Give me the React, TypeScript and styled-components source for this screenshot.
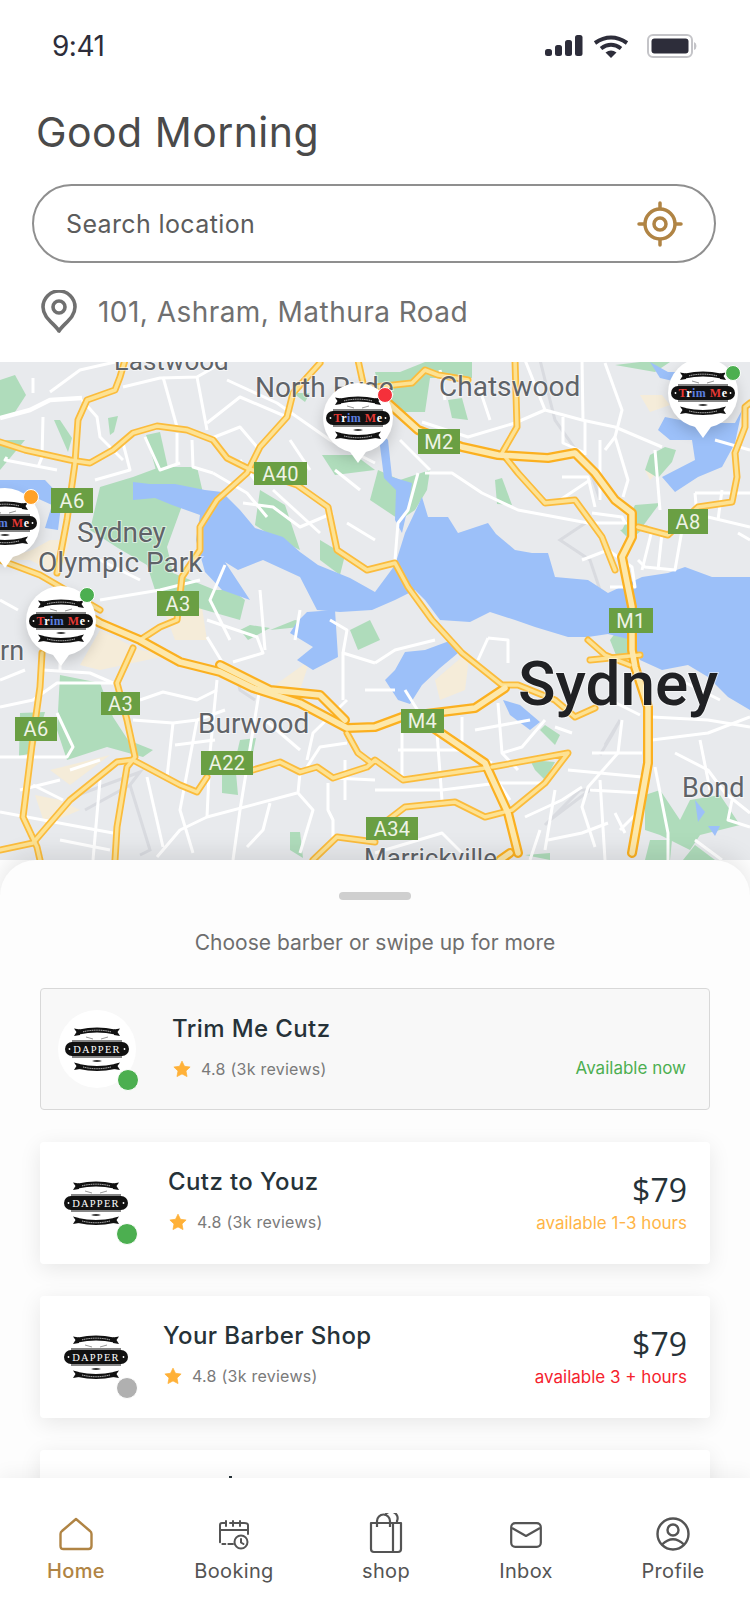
import React from "react";
import styled, { createGlobalStyle } from "styled-components";

const Global = createGlobalStyle`
  html, body { margin: 0; padding: 0; background: #fff; }
  * { box-sizing: border-box; }
`;

const Screen = styled.div`
  width: 750px; height: 1624px; overflow: hidden; display: flex; flex-direction: column;
  background: #fff; font-family: Inter, "Noto Sans", sans-serif; color: #444;
`;
const Header = styled.header`display: flex; flex-direction: column; height: 362px; flex: none;`;
const StatusBar = styled.div`
  height: 107px; flex: none; display: flex; justify-content: space-between; align-items: flex-start;
  padding: 28px 53px 0 52px;
`;
const Clock = styled.span`font: 400 28px/36px Inter, sans-serif; color: #2d2d3a; letter-spacing: -.5px;`;
const StatusIcons = styled.div`display: flex; align-items: center; gap: 10px; margin-top: 6px;`;
const Title = styled.h1`
  margin: 0 0 0 36px; font: 400 41px/50px Inter, sans-serif; color: #4a4a4a; letter-spacing: .45px; height: 50px;
`;
const SearchBox = styled.div`
  margin: 27px 34px 0 32px; height: 79px; border: 2px solid #8f8f8f; border-radius: 40px; display: flex;
  align-items: center; justify-content: space-between; padding: 0 31px 0 32px;
`;
const SearchText = styled.span`font: 400 25px/30px Inter, sans-serif; color: #5c5c5c; letter-spacing: .37px;`;
const LocationRow = styled.div`margin: 27px 0 0 41px; height: 43px; display: flex; align-items: center; gap: 21px;`;
const LocationText = styled.span`font: 400 28px/36px Inter, sans-serif; color: #707070; letter-spacing: .45px;`;

const MapArea = styled.section`position: relative; height: 498px; flex: none; overflow: hidden; background: #e8eaed;`;
const MapSvg = styled.svg`display: block; width: 750px; height: 498px;`;
const Pin = styled.div<{ $x: number; $y: number }>`
  position: absolute; left: ${p => p.$x - 35}px; top: ${p => p.$y - 35 - 362}px; width: 70px; height: 70px;
  border-radius: 50%; background: #fff; display: flex; align-items: center; justify-content: center;
  box-shadow: 0 6px 14px rgba(0,0,0,.16);
  &::after {
    content: ""; position: absolute; left: 26px; bottom: -10px; width: 18px; height: 18px; background: #fff;
    clip-path: polygon(0 30%, 100% 30%, 50% 100%);
  }
`;
const PinDot = styled.span<{ $c: string; $dx: number; $dy: number }>`
  position: absolute; left: ${p => 35 + p.$dx - 8}px; top: ${p => 35 + p.$dy - 8}px; width: 16px; height: 16px;
  border-radius: 50%; background: ${p => p.$c}; border: 1px solid #fff; z-index: 1;
`;

const Sheet = styled.section`
  position: relative; z-index: 1; flex: 1; min-height: 0; overflow: hidden; background: #fdfdfd;
  border-radius: 36px 36px 0 0; padding-top: 32px; display: flex; flex-direction: column; align-items: center;
  box-shadow: 0 -6px 24px rgba(0,0,0,.1);
`;
const SheetWrap = styled.div`position: relative; z-index: 1; flex: 1; min-height: 0; display: flex;`;
const Handle = styled.div`width: 72px; height: 8px; border-radius: 4px; background: #cfcfcf; flex: none;`;
const Hint = styled.p`margin: 28px 0 0; font: 400 21px/30px Inter, sans-serif; color: #6e6e6e; flex: none;`;
const CardList = styled.div`margin-top: 30px; width: 670px; display: flex; flex-direction: column; gap: 32px; flex: none;`;
const Card = styled.article<{ $selected?: boolean }>`
  position: relative; height: 122px; flex: none; display: flex; padding: 0 23px 0 17px; border-radius: 4px;
  background: ${p => (p.$selected ? "#f8f8f8" : "#fff")};
  border: ${p => (p.$selected ? "1px solid #d8d8d8" : "none")};
  box-shadow: ${p => (p.$selected ? "none" : "0 5px 22px rgba(0,0,0,.09)")};
`;
const Avatar = styled.div`
  position: relative; width: 78px; height: 78px; border-radius: 50%; background: #fff; flex: none; align-self: center;
  display: flex; align-items: center; justify-content: center;
`;
const StatusDot = styled.span<{ $c: string }>`
  position: absolute; right: -3px; bottom: -3px; width: 22px; height: 22px; border-radius: 50%;
  background: ${p => p.$c}; border: 1px solid #fff;
`;
const Info = styled.div<{ $gap: number }>`margin-left: ${p => p.$gap}px; padding-top: 24px; display: flex; flex-direction: column; gap: 12px;`;
const Name = styled.h3`margin: 0; font: 500 24px/32px Inter, sans-serif; color: #263238; letter-spacing: .4px;`;
const Rating = styled.div`display: flex; align-items: center; gap: 10px; height: 24px; margin-left: 1px;`;
const RatingText = styled.span`font: 400 16px/24px Inter, sans-serif; color: #7a7a7a; letter-spacing: .25px;`;
const Right = styled.div`margin-left: auto; padding-top: 30px; display: flex; flex-direction: column; align-items: flex-end; justify-content: flex-end; gap: 2px; padding-bottom: 30px;`;
const Price = styled.div`font: 500 32px/36px "Open Sans", sans-serif; color: #263238; span { font-weight: 400; }`;
const Avail = styled.span<{ $c: string }>`font: 400 17px/24px Inter, sans-serif; color: ${p => p.$c}; position: relative; top: 1px;`;
const Tick = styled.span`position: absolute; left: 189px; top: 26px; width: 3px; height: 4px; background: #263238;`;

const Nav = styled.nav`
  position: relative; z-index: 2; height: 146px; flex: none; background: #fff; box-shadow: 0 -4px 18px rgba(0,0,0,.05);
`;
const NavRow = styled.div`display: grid; grid-template-columns: 152px 164px 140px 140px 154px; height: 100%;`;
const NavItem = styled.div<{ $active?: boolean }>`
  display: flex; flex-direction: column; align-items: center; color: ${p => (p.$active ? "#b08444" : "#545454")};
`;
const NavIconBox = styled.div`height: 76px; display: flex; align-items: flex-end; justify-content: center; padding-bottom: 3px;`;
const NavLabel = styled.span<{ $active?: boolean }>`
  font: ${p => (p.$active ? 500 : 400)} 20px/30px Inter, sans-serif; margin-top: 2px; letter-spacing: .35px;
`;

const water = [
  "133,482 150,484 175,484 205,490 222,492 240,510 255,528 283,537 300,552 318,565 350,578 375,592 395,565 405,533 422,497 428,517 448,517 458,533 488,523 496,534 515,550 532,553 548,553 555,577 588,580 608,593 642,577 668,573 685,567 712,577 735,577 750,577 750,710 728,697 708,677 688,665 662,670 640,660 632,640 608,634 588,637 568,637 535,627 515,620 490,612 470,622 440,620 425,600 415,590 395,600 372,610 340,612 317,610 300,577 263,560 238,570 225,562 250,600 222,590 205,572 196,540 200,515 172,505 155,498 133,500",
  "297,622 307,612 335,610 338,657 313,670 297,660 313,647 290,633",
  "395,670 405,652 425,650 452,640 458,653 440,668 422,685 410,704 398,700 385,680",
  "658,430 665,417 695,423 735,423 742,410 735,443 722,467 698,477 675,492 662,477 695,460 692,440 670,440",
  "378,430 388,440 392,477 412,483 408,507 402,533 395,520 396,490 384,478",
  "0,480 45,480 62,498 58,530 45,528 52,505 30,495 0,492",
  "650,362 668,372 680,372 690,385 660,378",
  "503,700 520,705 540,722 530,730 510,715",
  "695,800 705,812 698,822",
  "708,826 720,826 715,836",
];
const parks = [
  "60,675 100,683 113,717 128,740 153,750 143,757 107,747 67,760 57,730",
  "20,713 45,712 33,753 19,756",
  "100,487 133,477 160,467 197,467 203,493 183,503 167,547 173,573 215,590 232,590 245,600 240,620 170,600 155,590 147,565 118,548 90,530",
  "0,380 15,375 26,395 15,412 0,418",
  "54,420 60,420 72,438 68,452",
  "108,418 118,416 114,432 110,435",
  "146,435 160,432 168,468 156,470",
  "322,455 355,455 375,470 335,475",
  "293,393 310,393 305,402",
  "375,372 400,372 425,362 472,362 472,378 430,378 425,412 385,412",
  "448,400 462,398 468,420 452,418",
  "615,365 640,362 670,362 655,372",
  "650,455 665,447 676,450 672,462 658,478 645,470",
  "495,480 502,478 512,505 497,504",
  "427,490 430,470 400,480 378,470 370,500 400,520 415,510",
  "635,505 660,503 640,530 622,530",
  "620,530 648,525 630,540",
  "260,490 285,505 300,550 270,535 255,525",
  "320,540 345,555 340,575 320,560",
  "370,620 350,630 358,650 380,640",
  "250,625 270,628 248,640 240,630",
  "270,630 295,620 320,625",
  "625,620 640,640 620,665 610,640",
  "240,740 256,738 252,758 236,757",
  "222,775 236,773 238,795 222,793",
  "290,832 300,832 303,858 290,850",
  "645,795 660,790 680,820 690,800 720,795 740,825 700,835 690,850 660,835 645,830",
  "650,840 672,840 670,860 645,860",
  "683,860 695,845 715,860",
  "525,855 550,853 550,860",
  "530,760 555,762 545,780 535,770",
  "0,440 25,440 0,470",
  "545,725 560,735 555,745 540,730",
];
const sand = [
  "0,560 32,550 50,540 70,540 60,575 30,560",
  "100,630 140,650 170,655 100,670 80,665",
  "160,600 200,595 207,640 175,640",
  "268,690 310,660 300,690 278,685",
  "435,680 470,650 465,690 440,700",
  "35,795 60,800 80,810 45,825",
  "50,770 110,755 70,785",
  "640,395 662,395 670,405 650,412",
  "645,470 660,470 650,480",
];
const grey = [
  "78,795 140,772 130,785 85,810",
  "130,785 150,850 140,855",
  "590,520 560,540 590,560 600,590",
  "600,755 612,735 620,720 605,745",
  "545,825 580,790 590,790 550,820",
  "540,360 555,420 590,470 600,500",
  "235,670 240,690 255,700",
];
const minor = [
  "0,418 30,410 50,400 82,398","43,417 42,457 38,467","7,457 5,460 57,470","33,378 33,393","50,392 80,370 115,362",
  "82,400 97,417 100,437 123,460","123,387 160,378 197,377 227,360","163,377 177,427","197,377 207,430",
  "227,380 277,403 330,440 375,463","207,440 240,427 257,447","207,423 240,397 287,417","123,443 130,470 95,480",
  "145,437 160,470 180,463","177,463 177,433","192,440 193,467 213,473","213,473 247,493 267,517",
  "243,503 273,507 300,527 333,513","273,490 320,533","347,523 375,540","425,473 452,473 482,493 518,510 588,523 635,523",
  "418,473 408,510 398,523 395,560","422,422 468,437 515,423 545,410 582,420 615,427 662,447","563,417 563,443 585,453",
  "582,360 583,420","605,363 622,410 615,437 628,480 623,497","525,360 545,410","585,420 585,455","615,437 605,450",
  "695,493 750,493","695,493 698,527","722,490 718,520","708,517 750,527","738,533 750,540","562,477 588,477 595,507",
  "592,513 622,517 625,523","582,560 608,550 632,567 635,587 610,587","638,560 645,567 675,570 682,530","642,570 652,530","662,533 658,570",
  "0,707 33,700 57,683 113,683","43,670 90,673 113,683","0,757 67,757 73,747 57,713","133,720 173,723 197,720 225,710",
  "140,700 163,692 197,700 217,690","217,680 210,753 207,817","173,723 167,777","197,720 180,810 193,853","260,687 240,810 233,860",
  "0,812 113,833","33,785 63,800","100,780 93,860","147,777 163,847","297,793 207,817 180,830 157,857","300,773 298,793 313,810 300,853",
  "270,803 263,830 247,847","328,783 328,810 333,820 333,840","375,780 333,778","343,700 343,653 375,663","343,653 347,630 330,620",
  "233,662 263,653 257,637 207,620","207,637 227,670","347,700 313,733 307,760","347,743 320,747 307,767","375,663 395,650 435,640",
  "488,638 508,640 508,663","488,638 478,660","402,733 402,777","398,750 462,750 492,763","437,733 442,800","462,717 462,750",
  "498,703 502,753 518,770","545,720 522,747 502,753","555,727 572,733","375,790 442,790 498,783 542,783","568,770 642,777",
  "622,720 618,753 588,787 582,807 595,847","592,753 642,753","590,790 642,793","615,813 625,833","652,740 708,733 750,717","652,717 708,720 750,727",
  "675,753 708,770 725,793 750,813","655,767 668,833 668,860","732,800 728,820 750,827","695,840 722,860","548,840 582,833 608,823",
  "525,817 562,800 582,787","375,853 442,833 462,853","0,525 40,520","100,600 160,590 200,580","260,590 265,650","300,610 295,640","0,600 18,610","0,680 25,670",
  "540,830 530,860","600,780 605,860","620,830 640,810","100,560 140,580","225,565 210,600 230,640","440,370 445,400",
  "60,640 60,670","175,745 215,740","265,720 300,750","365,690 395,690","405,690 430,730","475,730 530,720","610,700 640,715","680,680 720,700","70,770 100,760",
  "345,760 345,800","240,460 255,480","290,440 310,470","335,470 360,490","480,390 490,420","600,440 600,500","655,450 660,510","560,500 590,480","110,850 60,840","20,790 60,780",
  "680,380 680,410","715,440 750,450","350,405 330,425","400,440 430,470","490,770 510,800","555,790 545,850","700,740 710,790",
];
const highways = [
  "0,442 25,450 70,460 90,463 113,450 133,433 157,426 187,430 213,440 227,458 247,468 297,485 328,507 337,550 367,570 395,563 408,587 432,620 462,653 502,685 518,685 555,700 575,717 595,708",
  "125,360 120,377 115,390 87,400 78,420 75,463 67,520 57,573",
  "320,363 293,393 287,417 260,447 247,473 217,500 200,527 200,550 182,577 177,620 160,627 140,640",
  "0,850 33,843 70,800 117,762 133,760 180,785 197,792 207,777","253,770 280,762 300,772 317,767 333,778 367,767 375,760 403,780 485,768",
  "133,648 117,683 127,720 135,757 127,767 117,827 115,860","42,653 40,687 33,737 23,817 37,847 40,860",
  "313,860 337,837 375,842","347,733 358,753 370,762","492,767 568,753 545,783 512,810 485,817 455,802 405,807 388,820",
  "515,360 517,427 502,453 518,473 545,503 575,500 602,537 615,570","638,527 668,535 698,507 732,502 737,477 735,453 745,427 745,407 750,403",
  "375,387 412,383 425,370 438,375 468,380","358,360 363,383","0,560 40,575 100,610","588,640 605,655 630,665","590,660 640,655",
];
const motorways = [
  "60,600 100,623 140,640 180,662 220,672 253,688 300,703 347,728 375,727 402,717 475,708 505,688",
  "220,665 270,690 320,695 345,720","432,727 485,763 508,813 518,853",
  "388,403 418,430 462,447 498,455 548,458 575,453 595,473 615,500 632,513 632,537 622,557 632,607",
  "632,620 632,650 635,667 648,707 648,763 632,853","510,853 500,860",
];
const shields: [number, number, number, number, string][] = [
  [254,462,53,23,"A40"],[51,488,42,25,"A6"],[157,591,42,25,"A3"],[418,429,42,25,"M2"],[668,509,40,25,"A8"],[609,608,44,25,"M1"],
  [101,692,39,23,"A3"],[15,717,42,24,"A6"],[201,751,52,24,"A22"],[401,709,43,24,"M4"],[366,817,52,23,"A34"],
];
const labels: [number, number, number, string][] = [
  [114,370,26,"Eastwood"],[255,397,28,"North Ryde"],[439,396,28,"Chatswood"],[77,542,28,"Sydney"],[38,572,28,"Olympic Park"],
  [0,660,27,"rn"],[198,733,28,"Burwood"],[682,797,27,"Bond"],[364,867,26,"Marrickville"],
];

const Logo = ({ kind }: { kind: "dapper" | "trim" }) => (
  <svg width={64} height={48} viewBox="0 0 64 48">
    <path d="M14 4.500 Q32 .5 50 4.500 L50 9.500 Q32 5.500 14 9.500Z" fill="#111" />
    <path d="M15 4.500 L9 3.500 L11.500 7 L9 11 L15 10Z M49 4.500 L55 3.500 L52.500 7 L55 11 L49 10Z" fill="#111" />
    <path d="M18 6.800 Q32 3.500 46 6.800" fill="none" stroke="#ddd" strokeWidth=".9" strokeDasharray="1.200 .6" />
    <path d="M21 12 L28 14 M43 12 L36 14" stroke="#999" strokeWidth="1" />
    <rect x="7" y="15.500" width="50" height="1" fill="#111" />
    <rect x="0" y="17" width="64" height="14" rx="7" fill="#111" />
    <rect x="7" y="31.500" width="50" height="1" fill="#111" />
    <circle cx="4.500" cy="24" r=".9" fill="#fff" /><circle cx="59.500" cy="24" r=".9" fill="#fff" />
    {kind === "dapper" ? (
      <text x="32" y="27.800" textAnchor="middle" fontFamily='"Liberation Serif", serif' fontSize="10.500" letterSpacing="1.200" fill="#fff">DAPPER</text>
    ) : (
      <text x="32" y="28" textAnchor="middle" fontFamily='"Liberation Serif", serif' fontSize="12" fontWeight="700" letterSpacing=".5" fill="#fff">
        <tspan fill="#e53935">T</tspan><tspan>r</tspan><tspan fill="#5b7fe0">im</tspan><tspan> </tspan><tspan fill="#e53935">M</tspan><tspan>e</tspan>
      </text>
    )}
    <path d="M27 36 Q32 34 37 36 Q32 38 27 36Z" fill="#333" />
    <path d="M14 39 Q32 43 50 39 L50 44 Q32 48 14 44Z" fill="#111" />
    <path d="M15 39 L9 37.500 L11.500 41 L9 45 L15 44Z M49 39 L55 37.500 L52.500 41 L55 45 L49 44Z" fill="#111" />
    <path d="M18 42 Q32 45.500 46 42" fill="none" stroke="#ddd" strokeWidth=".9" strokeDasharray="1.200 .6" />
  </svg>
);

const Star = () => (
  <svg width="18" height="18" viewBox="0 0 24 24"><path d="M12 1.500l3.300 6.900 7.500 1-5.500 5.200 1.400 7.500L12 18.500l-6.700 3.600 1.400-7.500L1.200 9.400l7.500-1z" fill="#ffb138" stroke="#ffb138" strokeLinejoin="round" /></svg>
);

const Map = () => (
  <MapSvg viewBox="0 362 750 498">
    <rect x="0" y="362" width="750" height="498" fill="#e8eaed" />
    {sand.map((p, i) => <polygon key={i} points={p} fill="#f5ecd9" />)}
    {grey.map((p, i) => <polyline key={i} points={p} fill="none" stroke="#d9dbe0" strokeWidth="3" />)}
    {parks.map((p, i) => <polygon key={i} points={p} fill="#afdcbb" />)}
    {water.map((p, i) => <polygon key={i} points={p} fill="#9cc0f9" />)}
    {minor.map((p, i) => <polyline key={i} points={p} fill="none" stroke="#fff" strokeWidth={i < 1 ? 4.500 : 3} strokeLinejoin="round" />)}
    {highways.map((p, i) => <polyline key={i} points={p} fill="none" stroke="#fbbc3c" strokeWidth="7" strokeLinejoin="round" strokeLinecap="round" />)}
    {motorways.map((p, i) => <polyline key={i} points={p} fill="none" stroke="#fbb020" strokeWidth="10" strokeLinejoin="round" strokeLinecap="round" />)}
    {highways.map((p, i) => <polyline key={i} points={p} fill="none" stroke="#fde293" strokeWidth="3.500" strokeLinejoin="round" strokeLinecap="round" />)}
    {motorways.map((p, i) => <polyline key={i} points={p} fill="none" stroke="#fde8ab" strokeWidth="5.500" strokeLinejoin="round" strokeLinecap="round" />)}
    {shields.map(([x, y, w, h, t]) => (
      <g key={t + x}>
        <rect x={x} y={y} width={w} height={h} fill="#6a9f43" />
        <text x={x + w / 2} y={y + h / 2 + 7} textAnchor="middle" fontFamily="Roboto, sans-serif" fontSize="20" fill="#eef3e6" letterSpacing=".3">{t}</text>
      </g>
    ))}
    {labels.map(([x, y, s, t]) => (
      <text key={t} x={x} y={y} fontFamily="Roboto, sans-serif" fontSize={s} fill="#5f6368" stroke="#fff" strokeOpacity=".55" strokeWidth="2" paintOrder="stroke">{t}</text>
    ))}
    <text x="518" y="705" fontFamily="Roboto, sans-serif" fontWeight="500" fontSize="62" fill="#202124" stroke="#fff" strokeOpacity=".5" strokeWidth="2" paintOrder="stroke">Sydney</text>
  </MapSvg>
);

const cards = [
  { name: "Cutz to Youz", gap: 33, avail: "available 1-3 hours", c: "#ffb547", dot: "#4caf50" },
  { name: "Your Barber Shop", gap: 28, avail: "available 3 + hours", c: "#f5222d", dot: "#b0b0b0" },
];

export default function App() {
  return (
    <Screen>
      <Global />
      <Header>
        <StatusBar>
          <Clock>9:41</Clock>
          <StatusIcons>
            <svg width="38" height="22" viewBox="0 0 38 22" fill="#2d2d3a">
              <rect x="0" y="14" width="7" height="7" rx="2.500" /><rect x="10" y="10" width="7" height="11" rx="2.500" />
              <rect x="20" y="5" width="7" height="16" rx="2.500" /><rect x="30" y="0" width="7.500" height="21" rx="2.500" />
            </svg>
            <svg width="36" height="23" viewBox="0 0 36 23" fill="none" stroke="#2d2d3a" strokeWidth="4">
              <path d="M2 8 Q18 -3 34 8" /><path d="M8 13.500 Q18 6 28 13.500" /><path d="M18 23 l-5.500 -5.500 Q18 13.500 23.500 17.500z" fill="#2d2d3a" stroke="none" />
            </svg>
            <svg width="50" height="24" viewBox="0 0 50 24" style={{ marginLeft: 8 }}>
              <rect x="1" y="1" width="44" height="22" rx="5" fill="none" stroke="#c4c4c8" strokeWidth="2" />
              <rect x="4.500" y="4.500" width="37" height="15" rx="3" fill="#2d2d3a" />
              <path d="M47 8 Q49.500 9 49.500 12 Q49.500 15 47 16z" fill="#c4c4c8" />
            </svg>
          </StatusIcons>
        </StatusBar>
        <Title>Good Morning</Title>
        <SearchBox>
          <SearchText>Search location</SearchText>
          <svg width="46" height="46" viewBox="0 0 46 46" fill="none" stroke="#b08444">
            <circle cx="23" cy="23" r="15" strokeWidth="3.500" /><circle cx="23" cy="23" r="6" strokeWidth="3.500" />
            <path d="M23 2v5M23 39v5M2 23h5M39 23h5" strokeWidth="3.500" strokeLinecap="round" />
          </svg>
        </SearchBox>
        <LocationRow>
          <svg width="36" height="44" viewBox="0 0 36 44" fill="none" stroke="#707070" strokeWidth="3.600" strokeLinejoin="round">
            <path d="M18 41 C14 34 2 28 2 17 A16 16 0 0 1 34 17 C34 28 22 34 18 41Z" /><circle cx="18" cy="17" r="6" />
          </svg>
          <LocationText>101, Ashram, Mathura Road</LocationText>
        </LocationRow>
      </Header>
      <MapArea>
        <Map />
        <Pin $x={358} $y={418}><Logo kind="trim" /><PinDot $c="#f5303a" $dx={27} $dy={-23} /></Pin>
        <Pin $x={703} $y={393}><Logo kind="trim" /><PinDot $c="#4caf50" $dx={30} $dy={-20} /></Pin>
        <Pin $x={5} $y={523}><Logo kind="trim" /><PinDot $c="#ffa126" $dx={26} $dy={-26} /></Pin>
        <Pin $x={61} $y={621}><Logo kind="trim" /><PinDot $c="#4caf50" $dx={26} $dy={-26} /></Pin>
      </MapArea>
      <SheetWrap>
        <Sheet>
          <Handle />
          <Hint>Choose barber or swipe up for more</Hint>
          <CardList>
            <Card $selected>
              <Avatar><Logo kind="dapper" /><StatusDot $c="#4caf50" /></Avatar>
              <Info $gap={36}>
                <Name>Trim Me Cutz</Name>
                <Rating><Star /><RatingText>4.8 (3k reviews)</RatingText></Rating>
              </Info>
              <Right><Avail $c="#4caf50">Available now</Avail></Right>
            </Card>
            {cards.map(c => (
              <Card key={c.name}>
                <Avatar><Logo kind="dapper" /><StatusDot $c={c.dot} /></Avatar>
                <Info $gap={c.gap}>
                  <Name>{c.name}</Name>
                  <Rating><Star /><RatingText>4.8 (3k reviews)</RatingText></Rating>
                </Info>
                <Right><Price><span>$</span>79</Price><Avail $c={c.c}>{c.avail}</Avail></Right>
              </Card>
            ))}
            <Card><Tick /></Card>
          </CardList>
        </Sheet>
      </SheetWrap>
      <Nav>
        <NavRow>
          <NavItem $active>
            <NavIconBox>
              <svg width="34" height="34" viewBox="0 0 34 34" fill="none" stroke="currentColor" strokeWidth="2.400" strokeLinejoin="round">
                <path d="M17 2 L31 14 Q32.500 15 32.500 17 L32.500 29 Q32.500 32 29.500 32 L4.500 32 Q1.500 32 1.500 29 L1.500 17 Q1.500 15 3 14Z" />
              </svg>
            </NavIconBox>
            <NavLabel $active>Home</NavLabel>
          </NavItem>
          <NavItem>
            <NavIconBox>
              <svg width="30" height="30" viewBox="0 0 30 30" fill="none" stroke="currentColor" strokeWidth="2" strokeLinecap="round" style={{ marginBottom: 1 }}>
                <path d="M7 3 H3 Q1 3 1 5 V22 Q1 24 3 24 H14" strokeDasharray="24 3 3 3" /><path d="M7 1v5M14 1v5M21 1v5M11 3h6M17 3h8 Q29 3 29 5 V14" />
                <path d="M1 10 H29" /><circle cx="22" cy="22" r="6.500" /><path d="M22 19v3.500l2.500 1.500" />
              </svg>
            </NavIconBox>
            <NavLabel>Booking</NavLabel>
          </NavItem>
          <NavItem>
            <NavIconBox>
              <svg width="34" height="41" viewBox="0 0 34 41" fill="none" stroke="currentColor" strokeWidth="2.200" strokeLinejoin="round" style={{ marginBottom: -3 }}>
                <path d="M2 10 H24 V39 H5 Q2 39 2 36Z" /><path d="M24 10 H32 V36 Q32 39 29 39 H24" />
                <path d="M8 14 V8 A6.500 6.500 0 0 1 21 8 V14" /><path d="M16 2.500 A6.500 6.500 0 0 1 28 8 V10" />
              </svg>
            </NavIconBox>
            <NavLabel>shop</NavLabel>
          </NavItem>
          <NavItem>
            <NavIconBox>
              <svg width="32" height="26" viewBox="0 0 32 26" fill="none" stroke="currentColor" strokeWidth="2.200" strokeLinejoin="round" style={{ marginBottom: 3 }}>
                <rect x="1.200" y="1.200" width="29.600" height="23.600" rx="4" /><path d="M2 6 L16 14 L30 6" />
              </svg>
            </NavIconBox>
            <NavLabel>Inbox</NavLabel>
          </NavItem>
          <NavItem>
            <NavIconBox>
              <svg width="34" height="34" viewBox="0 0 34 34" fill="none" stroke="currentColor" strokeWidth="2.400">
                <circle cx="17" cy="17" r="15.500" /><circle cx="17" cy="13" r="5.500" /><path d="M6 27.500 Q17 17 28 27.500" />
              </svg>
            </NavIconBox>
            <NavLabel>Profile</NavLabel>
          </NavItem>
        </NavRow>
      </Nav>
    </Screen>
  );
}
